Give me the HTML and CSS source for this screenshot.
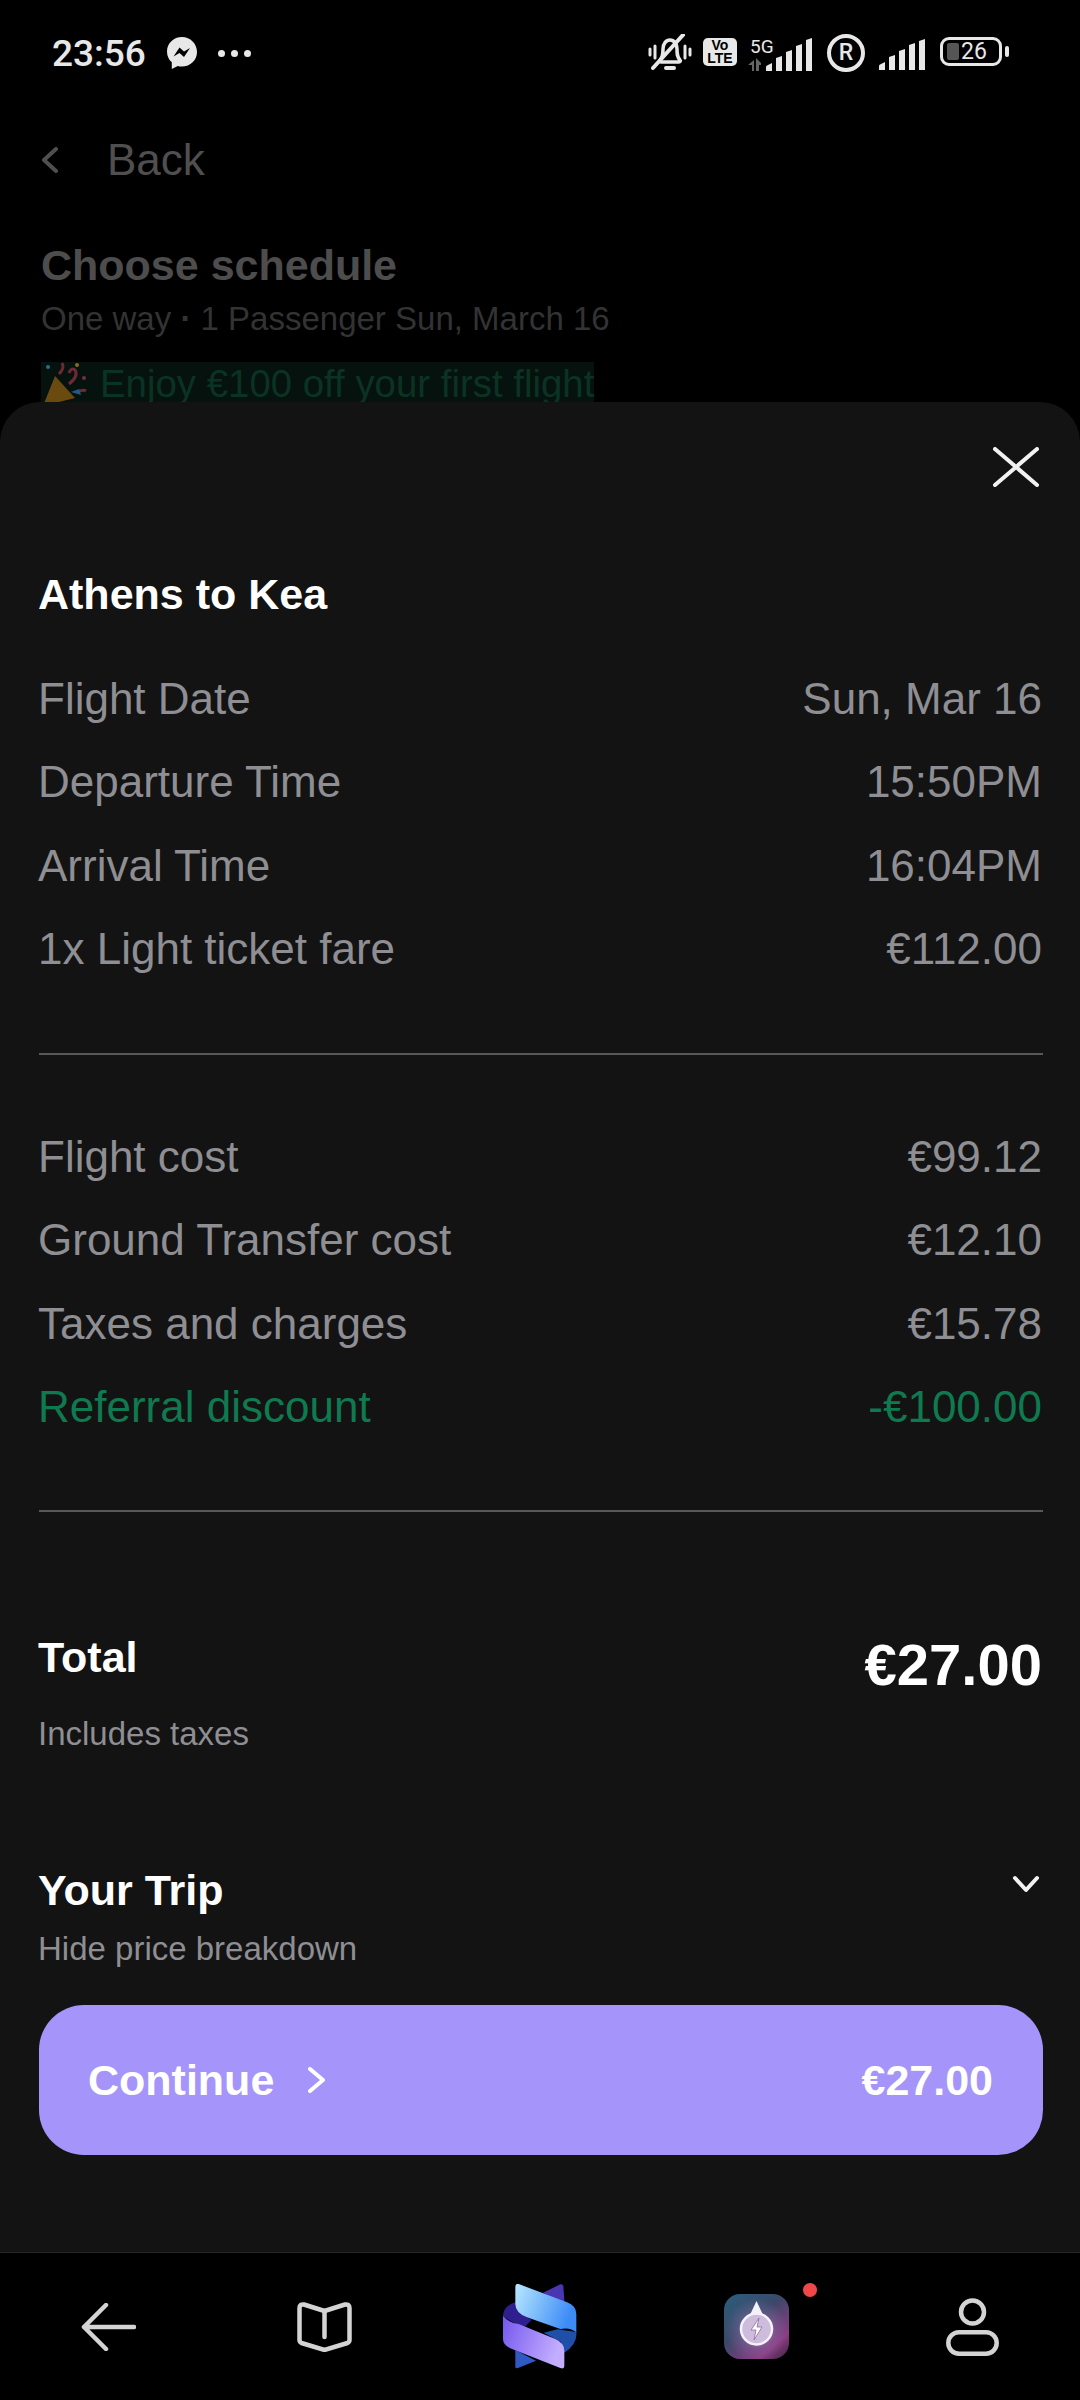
FILE: index.html
```html
<!DOCTYPE html>
<html lang="en">
<head>
    <meta charset="UTF-8">
    <meta name="viewport" content="width=device-width, initial-scale=1.0">
    <title>Choose schedule</title>
    <link rel="stylesheet" href="styles.css">
</head>
<body>
    <div class="status-bar">
        <div class="status-left">
            <span class="clock">23:56</span>
            <svg class="messenger" width="30" height="33" viewBox="0 0 30 33">
                <path d="M15 0C6.600 0 0 6.200 0 14.500c0 4.400 1.800 8.200 4.800 10.800v6.700l6-3c1.300.4 2.700.5 4.200.5 8.400 0 15-6.200 15-14.500S23.400 0 15 0z" fill="#e8e8e8"/>
                <path d="M6.500 19.500l6-9 4.500 4 6-3.500-6 9-4.500-4z" fill="#000"/>
            </svg>
            <span class="dots"><i></i><i></i><i></i></span>
        </div>
        <div class="status-right">
            <svg class="icon-bell" width="44" height="38" viewBox="0 0 44 38" fill="none" stroke="#e8e8e8">
                <path d="M12 26c3-3 3-6 3-11 0-5 3-9 7-9s7 4 7 9c0 5 0 8 3 11 1 1 0 2-1 2H13c-1 0-2-1-1-2z" stroke-width="3.500"/>
                <path d="M35 1L5 34" stroke-width="4" stroke-linecap="round"/>
                <path d="M18 34h8" stroke-width="4" stroke-linecap="round"/>
                <path d="M2 15v6M7 12v12M37 12v12M42 15v6" stroke-width="3" stroke-linecap="round"/>
            </svg>
            <div class="volte"><span>Vo</span><span>LTE</span></div>
            <svg class="icon-net" width="66" height="37" viewBox="0 -4 66 37">
                <text x="3" y="15" class="net-label">5G</text>
                <path d="M1 27l6-5v11H5v-6zM9 33V20l5 5v2h-2v6z" fill="#666"/>
                <path d="M19 33v-4q0-1 1-1.500l5-2.500v8zM29 33V20l6-2v15zM39 33V14l6-2v21zM49 33V8l6-2v27zM59 33V2l6-2v33z" fill="#e8e8e8"/>
            </svg>
            <div class="roaming">R</div>
            <svg class="icon-signal" width="48" height="31" viewBox="0 0 48 31">
                <path d="M1 31v-4q0-1 1-1.500l5-2.500v8zM11 31V18l6-2v15zM21 31V12l6-2v21zM31 31V6l6-2v27zM41 31V2l6-2v31z" fill="#e8e8e8"/>
            </svg>
            <div class="battery">
                <div class="battery-body"><span class="battery-fill"></span><span class="battery-level">26</span></div>
                <span class="battery-nub"></span>
            </div>
        </div>
    </div>

    <div class="behind">
        <div class="back-row">
            <svg width="18" height="26" viewBox="0 0 18 26" fill="none" stroke="#4f4f4f" stroke-width="4" stroke-linecap="round" stroke-linejoin="round">
                <path d="M15 2L3 13l12 11"/>
            </svg>
            <span>Back</span>
        </div>
        <h2 class="behind-title">Choose schedule</h2>
        <p class="behind-sub">One way <b>·</b> 1 Passenger Sun, March 16</p>
        <div class="promo">
            <svg width="47" height="44" viewBox="0 0 47 44">
                <path d="M2 44L14 14l20 22z" fill="#6b4a10"/>
                <path d="M18 12q6-6 3-11M28 22q10-8 6-14q-4-3-6 3M36 30q6-3 9-1" fill="none" stroke="#6e2a34" stroke-width="3"/>
                <circle cx="7" cy="5" r="2" fill="#2c6b8a"/>
                <circle cx="36" cy="3" r="2" fill="#8a6a1c"/>
                <circle cx="43" cy="16" r="2" fill="#7a2f3a"/>
                <path d="M30 30l8-3 2 6z" fill="#1f5a8a"/>
            </svg>
            <span>Enjoy €100 off your first flight</span>
        </div>
    </div>

    <div class="sheet">
        <div class="close-row">
            <svg width="46" height="40" viewBox="0 0 46 40" fill="none" stroke="#f2f2f2" stroke-width="4" stroke-linecap="round">
                <path d="M2 2l42 36M44 2L2 38"/>
            </svg>
        </div>
        <h2 class="sheet-title">Athens to Kea</h2>

        <div class="rows rows-top">
            <div class="row"><span>Flight Date</span><span>Sun, Mar 16</span></div>
            <div class="row"><span>Departure Time</span><span>15:50PM</span></div>
            <div class="row"><span>Arrival Time</span><span>16:04PM</span></div>
            <div class="row"><span>1x Light ticket fare</span><span>€112.00</span></div>
        </div>
        <hr class="divider">
        <div class="rows rows-cost">
            <div class="row"><span>Flight cost</span><span>€99.12</span></div>
            <div class="row"><span>Ground Transfer cost</span><span>€12.10</span></div>
            <div class="row"><span>Taxes and charges</span><span>€15.78</span></div>
            <div class="row discount"><span>Referral discount</span><span>-€100.00</span></div>
        </div>
        <hr class="divider divider-low">

        <div class="total">
            <div>
                <div class="total-label">Total</div>
                <div class="small-text taxes">Includes taxes</div>
            </div>
            <div class="total-price">€27.00</div>
        </div>

        <div class="trip">
            <div>
                <div class="trip-title">Your Trip</div>
                <div class="small-text">Hide price breakdown</div>
            </div>
            <svg class="trip-toggle" width="28" height="18" viewBox="0 0 28 18" fill="none" stroke="#f2f2f2" stroke-width="4" stroke-linecap="round" stroke-linejoin="round">
                <path d="M3 3l11 12L25 3"/>
            </svg>
        </div>

        <button class="continue-btn">
            <span class="continue-left">Continue
                <svg width="21" height="26" viewBox="0 0 21 26" fill="none" stroke="#fff" stroke-width="4" stroke-linecap="round" stroke-linejoin="round">
                    <path d="M4 2l13 11L4 24"/>
                </svg>
            </span>
            <span>€27.00</span>
        </button>
    </div>

    <div class="nav">
        <div class="nav-item">
            <svg width="55" height="48" viewBox="0 0 55 48" fill="none" stroke="#d4d4d4" stroke-width="4.500" stroke-linecap="round" stroke-linejoin="round">
                <path d="M25 2L3 24l22 22M3 24h50"/>
            </svg>
        </div>
        <div class="nav-item">
            <svg width="55" height="50" viewBox="0 0 55 50" fill="none" stroke="#d4d4d4" stroke-width="4.500" stroke-linecap="round" stroke-linejoin="round">
                <path d="M27.500 9L7 2.500Q2.500 2 2.500 6v32q0 2 2 3l23 7 23-7q2-1 2-3V6q0-4-4.500-3.500z"/>
                <path d="M27.500 9v26"/>
            </svg>
        </div>
        <div class="nav-item">
            <svg width="74" height="85" viewBox="128 70 222 255">
                <defs>
                    <linearGradient id="ribbonTop" x1="0" y1="0" x2="1" y2="0.300">
                        <stop offset="0" stop-color="#b9e8ff"/>
                        <stop offset="1" stop-color="#3d8cf6"/>
                    </linearGradient>
                    <linearGradient id="ribbonLow" x1="0" y1="0" x2="1" y2="0.300">
                        <stop offset="0" stop-color="#7558ee"/>
                        <stop offset="1" stop-color="#c3adff"/>
                    </linearGradient>
                </defs>
                <path d="M248 96L300 71q8-2 9 6l4 55z" fill="#4a35b2"/>
                <path d="M165 268v50q0 6 8 4l54-22z" fill="#2f5ac4"/>
                <path d="M128 168q0-32 38-44l10 30 38 24-24 24z" fill="#2e1e8e"/>
                <path d="M250 216l42-10 56 8q4 36-36 62l-10-32z" fill="#1f4fa9"/>
                <path d="M165 78q0-10 10-8l145 55q28 10 28 36v54q-18-16-48-10l-100-35q-35-14-35-40z" fill="url(#ribbonTop)"/>
                <path d="M128 166q16 20 47 24l110 45q27 12 27 35v46q0 10-12 6l-145-57q-27-10-27-30z" fill="url(#ribbonLow)"/>
            </svg>
        </div>
        <div class="nav-item">
            <div class="app-icon">
                <svg width="65" height="65" viewBox="0 0 65 65" fill="none">
                    <path d="M32.500 7l8 17H24.500z" fill="#f4f0f8"/>
                    <circle cx="32.500" cy="35" r="15.500" fill="#cdbcdc" stroke="#f6f2fa" stroke-width="2.500"/>
                    <path d="M35 24l-8 12h5l-2 10 8-13h-5z" fill="#fff" stroke="#8a6aa0" stroke-width="0.800"/>
                </svg>
                <span class="app-badge"></span>
            </div>
        </div>
        <div class="nav-item">
            <svg width="53" height="58" viewBox="0 0 53 58" fill="none" stroke="#d4d4d4" stroke-width="4.500">
                <circle cx="26.500" cy="14" r="11.500"/>
                <rect x="2.300" y="34.300" width="48.400" height="21.400" rx="10.700"/>
            </svg>
        </div>
    </div>
</body>
</html>
```

FILE: styles.css
```css
* {
    box-sizing: border-box;
}
body {
    font-family: "Liberation Sans", Arial, sans-serif;
    margin: 0;
    width: 1080px;
    height: 2400px;
    background-color: #000;
    display: flex;
    flex-direction: column;
    overflow: hidden;
}

/* status bar */
.status-bar {
    height: 105px;
    flex: none;
    display: flex;
    justify-content: space-between;
    align-items: flex-start;
    padding: 34px 71px 0 52px;
}
.status-left {
    display: flex;
    align-items: center;
    height: 38px;
}
.clock {
    font-family: Roboto, sans-serif;
    font-weight: 500;
    font-size: 37px;
    color: #e8e8e8;
    width: 115px;
}
.dots {
    display: flex;
    gap: 6px;
    margin-left: 21px;
}
.dots i {
    width: 7px;
    height: 7px;
    border-radius: 50%;
    background: #e8e8e8;
}
.status-right {
    display: flex;
    align-items: flex-start;
}
.volte {
    width: 34px;
    height: 28px;
    margin: 4px 10px 0 11px;
    border-radius: 5px;
    background: #e8e8e8;
    color: #000;
    font-family: "Liberation Sans", sans-serif;
    font-weight: 700;
    font-size: 14px;
    line-height: 13px;
    display: flex;
    flex-direction: column;
    align-items: center;
    justify-content: center;
}
.net-label {
    font-family: Roboto, sans-serif;
    font-size: 19px;
    fill: #e8e8e8;
}
.roaming {
    width: 38px;
    height: 38px;
    margin: 0 13px 0 14px;
    border: 4px solid #e8e8e8;
    border-radius: 50%;
    color: #e8e8e8;
    font-family: Roboto, sans-serif;
    font-weight: 500;
    font-size: 23px;
    line-height: 30px;
    text-align: center;
}
.icon-signal {
    margin-top: 5px;
}
.battery {
    display: flex;
    align-items: center;
    margin: 3px 0 0 14px;
}
.battery-body {
    width: 62px;
    height: 29px;
    border: 3px solid #e8e8e8;
    border-radius: 9px;
    display: flex;
    align-items: center;
    padding-left: 4px;
}
.battery-fill {
    width: 12px;
    height: 17px;
    border-radius: 2px;
    background: #555;
    margin-right: 2px;
}
.battery-level {
    font-family: Roboto, sans-serif;
    font-size: 23px;
    line-height: 23px;
    color: #e8e8e8;
}
.battery-nub {
    width: 4px;
    height: 11px;
    margin-left: 3px;
    border-radius: 2px;
    background: #e8e8e8;
}

/* dimmed page behind the sheet */
.behind {
    height: 297px;
    flex: none;
    overflow: hidden;
    padding-left: 41px;
}
.back-row {
    display: flex;
    align-items: center;
    height: 50px;
    margin-top: 30px;
    font-size: 44px;
    color: #4f4f4f;
}
.back-row span {
    margin-left: 48px;
}
.behind-title {
    margin: 55px 0 0;
    font-size: 43px;
    line-height: 50px;
    color: #4d4d4d;
}
.behind-sub {
    margin: 10px 0 0;
    font-size: 33px;
    line-height: 38px;
    color: #333;
}
.promo {
    display: inline-flex;
    align-items: flex-start;
    margin-top: 24px;
    height: 50px;
    font-size: 38.400px;
    line-height: 44px;
    color: #0b3324;
    background: #06120d;
}
.promo span {
    margin-left: 12px;
}

/* bottom sheet */
.sheet {
    flex: 1;
    background: #131313;
    border-radius: 40px 40px 0 0;
    padding: 45px 38px 0;
}
.close-row {
    display: flex;
    justify-content: flex-end;
    height: 40px;
}
.close-row svg {
    margin-right: 3px;
}
.sheet-title {
    margin: 82px 0 0;
    font-size: 43px;
    line-height: 50px;
    color: #fff;
}
.rows-top {
    margin-top: 38px;
}
.rows-cost {
    margin-top: 60px;
}
.row {
    display: flex;
    justify-content: space-between;
    align-items: center;
    height: 83.500px;
    font-size: 44px;
    color: #8e8e93;
}
.discount {
    color: #0f7a50;
}
.divider {
    height: 2px;
    margin: 62px -1px 0 1px;
    border: none;
    background: #58585a;
}
.divider-low {
    margin-top: 61px;
}
.total {
    display: flex;
    justify-content: space-between;
    align-items: flex-start;
    margin-top: 120px;
}
.total-label {
    font-size: 43px;
    line-height: 50px;
    font-weight: 700;
    color: #fff;
}
.total-price {
    font-size: 58px;
    line-height: 66px;
    font-weight: 700;
    color: #fff;
}
.small-text {
    font-size: 33px;
    line-height: 38px;
    color: #8e8e93;
}
.taxes {
    margin-top: 33px;
}
.trip {
    display: flex;
    justify-content: space-between;
    align-items: flex-start;
    margin-top: 112px;
}
.trip-title {
    font-size: 43px;
    line-height: 50px;
    font-weight: 700;
    color: #fff;
}
.trip .small-text {
    margin-top: 15px;
}
.trip-toggle {
    margin: 10px 2px 0 0;
}
.continue-btn {
    display: flex;
    justify-content: space-between;
    align-items: center;
    width: 100%;
    height: 150px;
    margin: 37px -1px 0 1px;
    padding: 0 50px 0 49px;
    border: none;
    border-radius: 45px;
    background-color: #a594f9;
    color: #fff;
    font-family: "Liberation Sans", Arial, sans-serif;
    font-weight: 700;
    font-size: 43px;
}
.continue-left {
    display: flex;
    align-items: center;
    gap: 32px;
}

/* bottom nav */
.nav {
    height: 148px;
    flex: none;
    display: grid;
    grid-template-columns: repeat(5, 1fr);
    align-items: center;
    border-top: 1px solid #262626;
}
.nav-item {
    display: flex;
    justify-content: center;
    align-items: center;
}
.app-icon {
    position: relative;
    width: 65px;
    height: 65px;
    border-radius: 16px;
    background:
        radial-gradient(circle at 50% 55%, rgba(190, 170, 215, 0.7) 0, rgba(150, 120, 180, 0.3) 40%, transparent 65%),
        linear-gradient(140deg, #2b5f7c 0%, #3a4868 42%, #8a3c82 78%, #3c2440 100%);
}
.app-badge {
    position: absolute;
    top: -11px;
    right: -28px;
    width: 14px;
    height: 14px;
    border-radius: 50%;
    background: #f04848;
}
```
